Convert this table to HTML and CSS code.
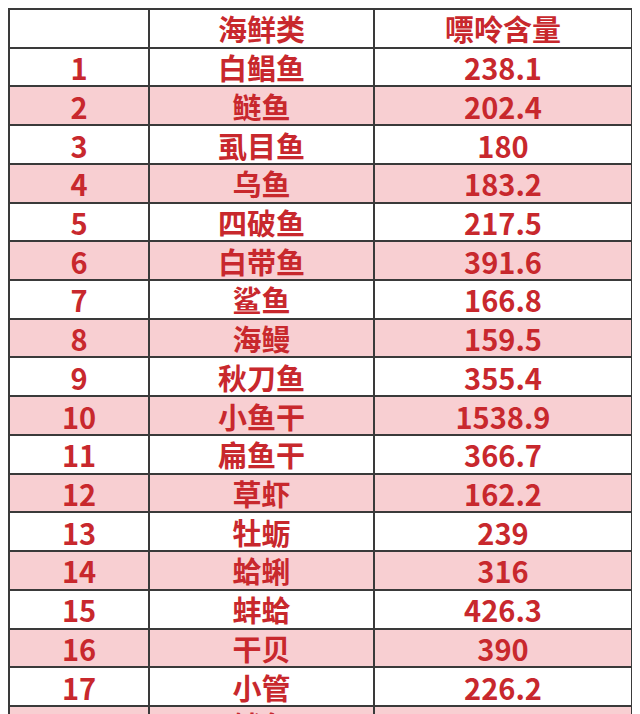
FILE: index.html
```html
<!DOCTYPE html>
<html lang="zh-CN">
<head>
<meta charset="utf-8">
<title>海鲜类嘌呤含量</title>
<link rel="stylesheet" href="styles.css">
</head>
<body>
<table class="purine">
  <colgroup>
    <col class="c-idx">
    <col class="c-name">
    <col class="c-val">
  </colgroup>
  <thead>
    <tr><th></th><th>海鲜类</th><th>嘌呤含量</th></tr>
  </thead>
  <tbody>
    <tr><td>1</td><td>白鲳鱼</td><td>238.1</td></tr>
    <tr class="pink"><td>2</td><td>鲢鱼</td><td>202.4</td></tr>
    <tr><td>3</td><td>虱目鱼</td><td>180</td></tr>
    <tr class="pink"><td>4</td><td>乌鱼</td><td>183.2</td></tr>
    <tr><td>5</td><td>四破鱼</td><td>217.5</td></tr>
    <tr class="pink"><td>6</td><td>白带鱼</td><td>391.6</td></tr>
    <tr><td>7</td><td>鲨鱼</td><td>166.8</td></tr>
    <tr class="pink"><td>8</td><td>海鳗</td><td>159.5</td></tr>
    <tr><td>9</td><td>秋刀鱼</td><td>355.4</td></tr>
    <tr class="pink"><td>10</td><td>小鱼干</td><td>1538.9</td></tr>
    <tr><td>11</td><td>扁鱼干</td><td>366.7</td></tr>
    <tr class="pink"><td>12</td><td>草虾</td><td>162.2</td></tr>
    <tr><td>13</td><td>牡蛎</td><td>239</td></tr>
    <tr class="pink"><td>14</td><td>蛤蜊</td><td>316</td></tr>
    <tr><td>15</td><td>蚌蛤</td><td>426.3</td></tr>
    <tr class="pink"><td>16</td><td>干贝</td><td>390</td></tr>
    <tr><td>17</td><td>小管</td><td>226.2</td></tr>
    <tr class="pink"><td>18</td><td>鱿鱼</td><td>124</td></tr>
  </tbody>
</table>
</body>
</html>
```
FILE: styles.css
```css
html, body {
  background: #ffffff;
}
body {
  margin: 8px;
  font-family: "Noto Sans CJK SC", "Open Sans", sans-serif;
}
.purine {
  width: 623px;
  table-layout: fixed;
  border-collapse: collapse;
  color: #c8282d;
  font-weight: 700;
  font-size: 29px;
}
.c-idx { width: 140px; }
.c-name { width: 225px; }
.c-val { width: 258px; }
.purine tr {
  height: 38.72px;
}
.purine th,
.purine td {
  border: 2px solid #3a3a3a;
  padding: 0;
  text-align: center;
  vertical-align: middle;
  line-height: 34px;
  font-weight: 700;
}
.purine tr.pink td {
  background: #f8cfd2;
}
```
